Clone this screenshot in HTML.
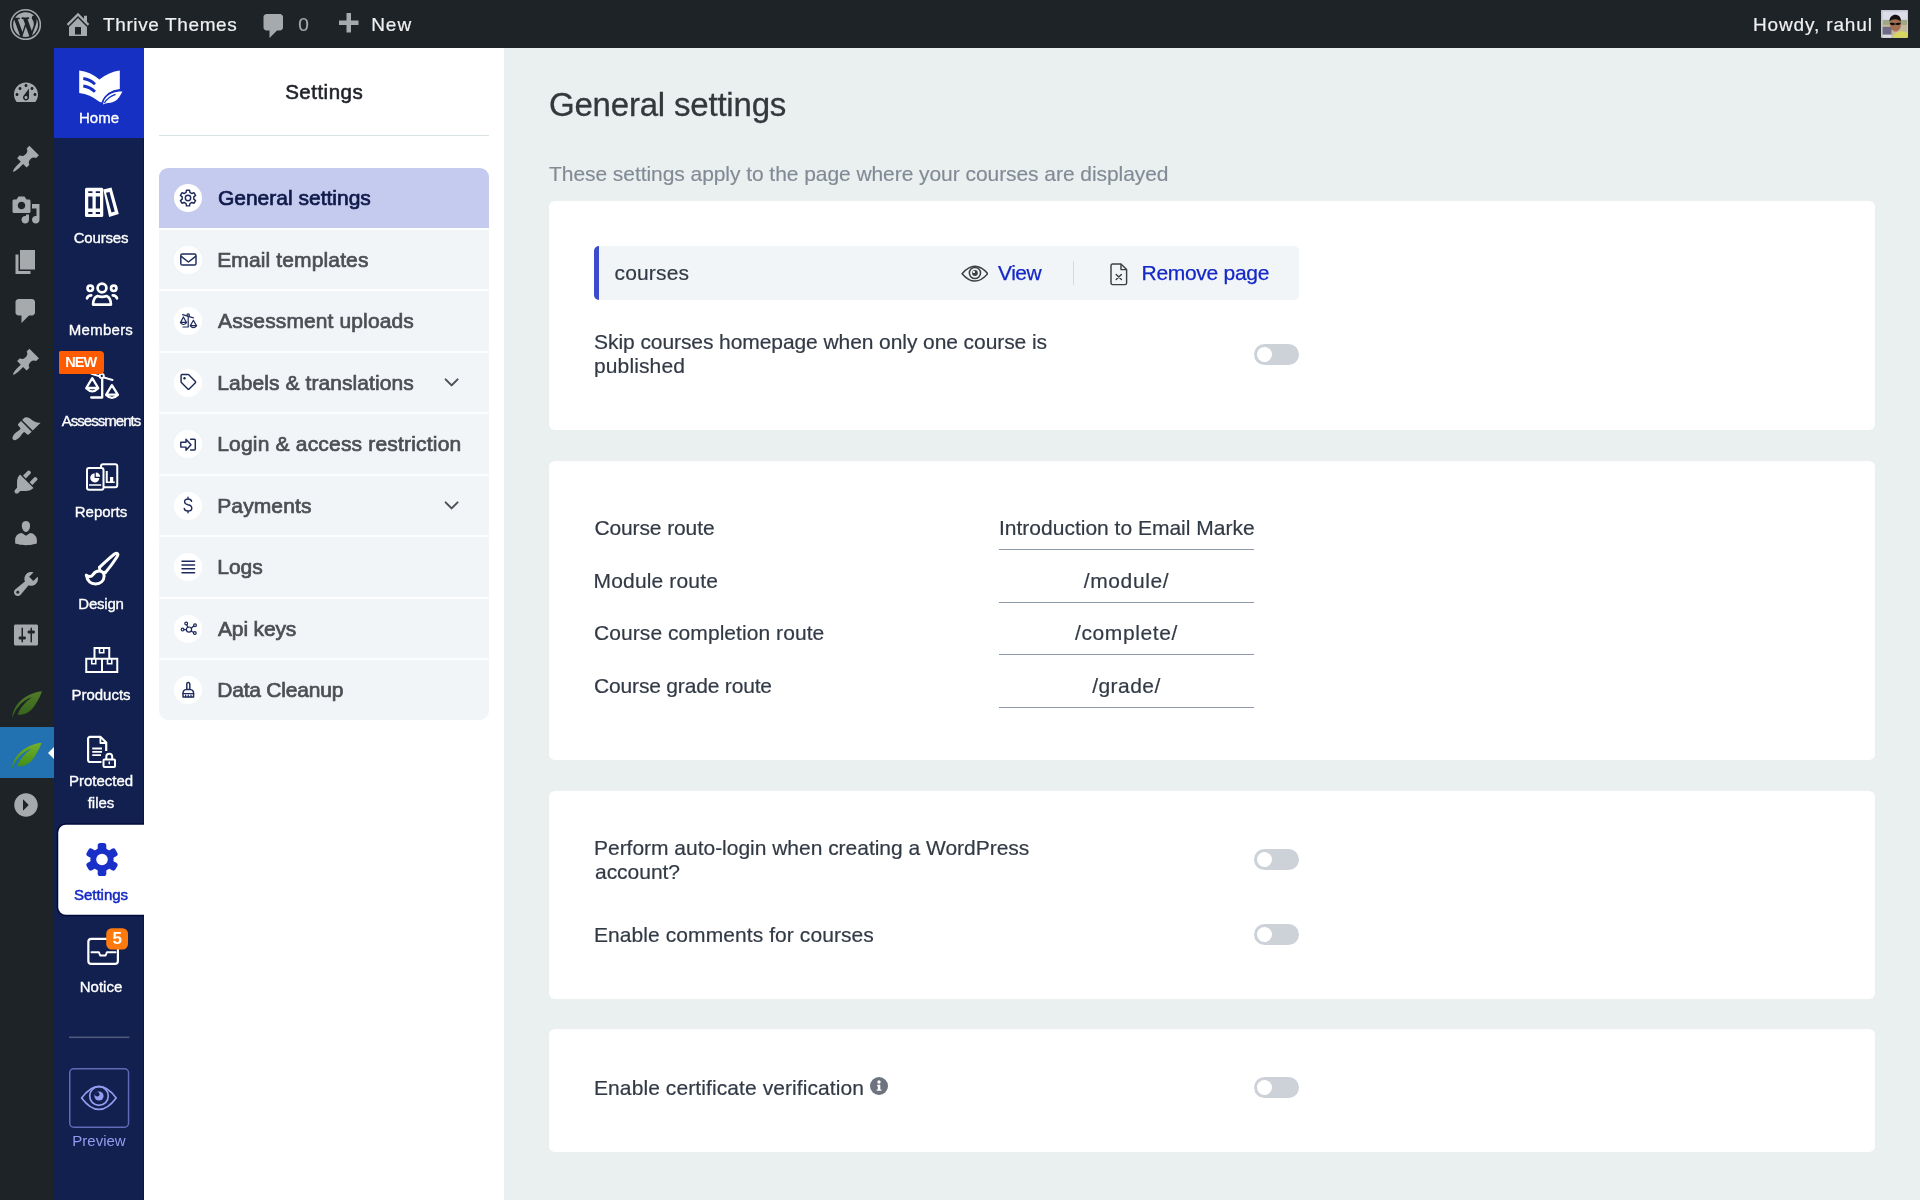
<!DOCTYPE html>
<html lang="en">
<head>
<meta charset="utf-8">
<title>Thrive Apprentice - General settings</title>
<style>
*{box-sizing:border-box;margin:0;padding:0}
html,body{width:1920px;height:1200px;overflow:hidden}
body{position:relative;background:#eaeff0;font-family:"Liberation Sans",Arial,sans-serif;color:#3a4149;-webkit-font-smoothing:antialiased}
#adminbar,#wpmenu,#tva,#panel,#main{will-change:transform}
/* ---------- WP admin bar ---------- */
#adminbar{position:absolute;left:0;top:0;width:1920px;height:48px;background:#1d2327;color:#f0f0f1;font-size:19px;-webkit-text-stroke:.2px currentColor;z-index:5}
#adminbar .t{position:absolute;top:.5px;height:48px;line-height:48px;white-space:nowrap}
#adminbar svg{position:absolute;fill:#a7aaad}
/* ---------- WP folded menu ---------- */
#wpmenu{position:absolute;left:0;top:48px;width:54px;height:1152px;background:#1d2327}
#wpmenu svg{position:absolute;left:11px;width:30px;height:30px;fill:#a7aaad;margin-top:1px}
#wpmenu .cur{position:absolute;left:0;top:679.3px;width:54px;height:50.7px;background:#2271b1}
#wpmenu .arrow{position:absolute;left:48px;top:698.8px;width:0;height:0;border:6px solid transparent;border-right-color:#fff;border-left-width:0}
/* ---------- Apprentice sidebar ---------- */
#tva{position:absolute;left:54px;top:48px;width:90px;height:1152px;overflow:hidden;box-shadow:inset -1px 0 #0a1543;background:#11204e;color:#fff;font-size:15px}
#tva .home{position:absolute;left:0;top:0;width:90px;height:90px;background:#1730c4}
#tva .lbl{position:absolute;width:120px;text-align:center;white-space:nowrap;line-height:18px;-webkit-text-stroke:.35px currentColor}
#tva .new{position:absolute;left:4.5px;top:303px;width:45.2px;height:22.7px;border-radius:1.5px 4px 4px 1.5px;background:#ff5c02;font-size:14.5px;font-weight:700;line-height:23px;text-align:center;letter-spacing:-.9px;text-indent:-.5px}
#tva .n5{position:absolute;left:52.25px;top:880.25px;width:21.75px;height:21.25px;font-size:17px;font-weight:700;line-height:21.25px;text-align:center}
#tva svg{position:absolute}
#tva .ic{fill:none;stroke:#fff;stroke-width:2;stroke-linejoin:round;stroke-linecap:round}
/* ---------- Settings panel ---------- */
#panel{position:absolute;left:144px;top:48px;width:360px;height:1152px;background:#fff}
#panel h2{position:absolute;left:0;top:31px;width:360px;text-align:center;font-size:20.5px;font-weight:400;color:#1f2328;line-height:26px;-webkit-text-stroke:.6px #1f2328}
#panel .hr{position:absolute;left:15px;top:86.6px;width:330px;height:1.6px;background:#d9e3e6}
#nav{position:absolute;left:15px;top:120px;width:330px;height:551.6px;background:#fdfdfe;border-radius:9px;overflow:hidden}
#nav .it{position:absolute;left:0;width:330px;height:59.75px;background:#f2f5f7;color:#4c4f55;font-size:21px;line-height:59.3px;white-space:nowrap;-webkit-text-stroke:.7px currentColor}
#nav .it.on{background:#c5cbee;color:#0f1a4a}
#nav .c{position:absolute;left:15px;top:16px;width:28px;height:28px;border-radius:50%;background:#fff}
#nav .it span{position:absolute;left:59px;top:0}
/* ---------- Content ---------- */
#main{position:absolute;left:504px;top:48px;width:1416px;height:1152px}
#main h1{position:absolute;left:45px;top:37px;font-size:33px;font-weight:400;color:#33383d;line-height:40px;white-space:nowrap;-webkit-text-stroke:.3px #33383d}
#main .desc{position:absolute;left:45px;top:113px;font-size:21px;line-height:26px;color:#808b95;white-space:nowrap;-webkit-text-stroke:.15px currentColor}
.card{position:absolute;left:45px;width:1326px;background:#fff;border-radius:6px}
.card .l{position:absolute;left:45px;font-size:21px;line-height:24px;color:#323a46;white-space:nowrap;-webkit-text-stroke:.2px currentColor}
.prow{position:absolute;left:45px;top:45px;width:705px;height:53.5px;background:#f2f5f7;border-radius:5px;border-left:5.5px solid #3a4ccb;font-size:21px;line-height:53.5px;white-space:nowrap}
.prow span,.prow svg,.prow i{position:absolute}
.prow .pn{left:15.5px;top:0;color:#323a46;-webkit-text-stroke:.2px currentColor}
.prow .lk{top:0;color:#1428c8;-webkit-text-stroke:.25px currentColor}
.prow .vs{left:473.5px;top:15px;width:1.5px;height:24px;background:#d6dbdf}
.tg{position:absolute;left:705px;width:45px;height:21px;border-radius:11px;background:#cdd2d9}
.tg i{position:absolute;left:3px;top:3px;width:15px;height:15px;border-radius:50%;background:#fff}
.inp{position:absolute;left:450px;width:255px;height:40px;border-bottom:1.5px solid #8f9bab;font-size:21px;line-height:35.5px;text-align:center;color:#323a46;white-space:nowrap;overflow:hidden;-webkit-text-stroke:.2px currentColor}
</style>
</head>
<body>

<!-- WP admin bar -->
<div id="adminbar">
  <svg viewBox="0 0 20 20" style="left:9.8px;top:8.5px;width:31.2px;height:31.2px"><path d="M20 10c0-5.52-4.48-10-10-10S0 4.48 0 10s4.48 10 10 10 10-4.48 10-10zM10 1.01c4.97 0 8.99 4.02 8.99 8.99s-4.02 8.99-8.99 8.99S1.01 14.97 1.01 10 5.03 1.01 10 1.01zM8.01 14.82L4.96 6.61c.49-.03 1.05-.08 1.05-.08.43-.05.38-1.01-.06-.99 0 0-1.29.1-2.13.1-.15 0-.33 0-.52-.01 1.44-2.17 3.9-3.6 6.7-3.6 2.09 0 3.99.79 5.41 2.09-.6-.08-1.45.35-1.45 1.42 0 .66.38 1.22.79 1.88.31.54.5 1.22.5 2.21 0 1.34-1.27 4.48-1.27 4.48l-2.71-7.5c.48-.03.75-.16.75-.16.43-.05.38-1.1-.05-1.08 0 0-1.3.11-2.14.11-.78 0-2.11-.11-2.11-.11-.43-.02-.48 1.06-.05 1.08l.84.08 1.12 3.04zm6.02 2.15L16.64 10s.67-1.69.39-3.81c.63 1.14.94 2.42.94 3.81 0 2.96-1.56 5.58-3.94 6.97zM2.68 6.77L6.5 17.25c-2.67-1.3-4.47-4.08-4.47-7.25 0-1.16.2-2.23.65-3.23zm7.45 4.53l2.29 6.25c-.75.27-1.57.42-2.42.42-.72 0-1.41-.11-2.06-.3z"/></svg><svg viewBox="0 0 20 20" style="left:63px;top:9px;width:30px;height:30px"><path d="M16 8.5l1.53 1.53-1.06 1.06L10 4.62l-6.47 6.47-1.06-1.06L10 2.5l4 4v-2h2v4zm-6-2.46l6 5.99V18H4v-5.97zM12 17v-5H8v5h4z"/></svg><svg viewBox="0 0 20 20" style="left:259px;top:11px;width:30px;height:30px"><path d="M5 2h9c1.1 0 2 .9 2 2v7c0 1.1-.9 2-2 2h-2l-5 5v-5H5c-1.1 0-2-.9-2-2V4c0-1.1.9-2 2-2z"/></svg><svg viewBox="0 0 20 20" style="left:333px;top:10px;width:30px;height:30px"><path d="M17 7v3h-5v5H9v-5H4V7h5V2h3v5h5z"/></svg>
  <span class="t" id="a0" style="letter-spacing:0.62px;margin-left:1.0px;left:102px">Thrive Themes</span>
  <span class="t" id="a1" style="letter-spacing:0.15px;margin-left:0.3px;left:298px;color:#a7aaad">0</span>
  <span class="t" id="a2" style="letter-spacing:0.95px;margin-left:-0.8px;left:372px">New</span>
  <span class="t" id="a3" style="letter-spacing:0.86px;margin-left:-3.2px;right:47.2px">Howdy, rahul</span>
  <svg viewBox="0 0 28 28" style="left:1880.6px;top:10px;width:27.7px;height:27.7px" >
    <rect width="28" height="28" fill="#c6c6d2"/>
    <rect x="1.6" y="1.6" width="24.8" height="26.4" fill="#dcdde8"/>
    <rect x="1.6" y="10" width="24.8" height="7" fill="#a0a784"/>
    <rect x="1.6" y="15" width="24.8" height="13" fill="#c4b99c"/>
    <rect x="1.6" y="17" width="9" height="8" fill="#6d6a86"/>
    <rect x="1.6" y="25" width="9" height="3" fill="#d9dbe2"/>
    <path d="M12 28C13 23 18 21 22 21.5L26.4 23V28Z" fill="#d8d560"/>
    <ellipse cx="14.6" cy="14.6" rx="5.6" ry="7.4" fill="#a06e4e"/>
    <path d="M8.6 11.8C8.4 6.6 12 4.6 14.8 4.8C18.6 5 20.6 8 20 12C18 8.6 11.6 8.4 8.6 11.8Z" fill="#16110f"/>
    <path d="M8.8 13.2C11 12.6 13 13 14.4 13.8C15.8 13 18.4 12.6 20 13.2C19.4 15.4 16.6 15.8 15.2 14.6H13.8C12.4 16 9.6 15.6 8.8 13.2Z" fill="#0c0c0e"/>
    <path d="M11.6 20.4Q13.6 22.4 16 21.2" stroke="#c98a84" stroke-width="1.2" fill="none"/>
  </svg>
</div>

<!-- WP folded admin menu -->
<div id="wpmenu">
  <svg viewBox="0 0 20 20" style="top:29px"><path d="M3.76 16h12.48c1.1-1.37 1.76-3.11 1.76-5 0-4.42-3.58-8-8-8s-8 3.58-8 8c0 1.89.66 3.63 1.76 5zM10 4c.55 0 1 .45 1 1s-.45 1-1 1-1-.45-1-1 .45-1 1-1zM6 6c.55 0 1 .45 1 1s-.45 1-1 1-1-.45-1-1 .45-1 1-1zm8 0c.55 0 1 .45 1 1s-.45 1-1 1-1-.45-1-1 .45-1 1-1zm-5.37 5.55L12 7v6c0 1.1-.9 2-2 2s-2-.9-2-2c0-.57.24-1.08.63-1.45zM4 10c.55 0 1 .45 1 1s-.45 1-1 1-1-.45-1-1 .45-1 1-1zm12 0c.55 0 1 .45 1 1s-.45 1-1 1-1-.45-1-1 .45-1 1-1zm-5 3c0-.55-.45-1-1-1s-1 .45-1 1 .45 1 1 1 1-.45 1-1z"/></svg>
  <svg viewBox="0 0 20 20" style="top:95px"><path d="M10.44 3.02l1.82-1.82 6.36 6.35-1.83 1.82c-1.05-.68-2.48-.57-3.41.36l-.75.75c-.92.93-1.04 2.35-.35 3.41l-1.83 1.82-2.41-2.41-2.8 2.79c-.42.42-3.38 2.71-3.8 2.29s1.86-3.39 2.28-3.81l2.79-2.79L4.1 9.36l1.83-1.82c1.05.69 2.48.57 3.4-.36l.75-.75c.93-.92 1.05-2.35.36-3.41z"/></svg>
  <svg viewBox="0 0 20 20" style="top:146px"><path d="M13 11V4c0-.55-.45-1-1-1h-1.67L9 1H5L3.67 3H2c-.55 0-1 .45-1 1v7c0 .55.45 1 1 1h10c.55 0 1-.45 1-1zM7 4.5c1.38 0 2.5 1.12 2.5 2.5S8.38 9.5 7 9.5 4.5 8.38 4.5 7 5.62 4.5 7 4.5zM14 6h5v10.5c0 1.38-1.12 2.5-2.5 2.5S14 17.88 14 16.5s1.12-2.5 2.5-2.5c.17 0 .34.02.5.05V9h-3V6zm-4 8.05V13h2v3.5c0 1.38-1.12 2.5-2.5 2.5S7 17.88 7 16.5 8.12 14 9.5 14c.17 0 .34.02.5.05z"/></svg>
  <svg viewBox="0 0 20 20" style="top:198px"><path d="M6 15V2h10v13H6zm-1 1h8v2H3V5h2v11z"/></svg>
  <svg viewBox="0 0 20 20" style="top:247px"><path d="M5 2h9c1.1 0 2 .9 2 2v7c0 1.1-.9 2-2 2h-2l-5 5v-5H5c-1.1 0-2-.9-2-2V4c0-1.1.9-2 2-2z"/></svg>
  <svg viewBox="0 0 20 20" style="top:298px"><path d="M10.44 3.02l1.82-1.82 6.36 6.35-1.83 1.82c-1.05-.68-2.48-.57-3.41.36l-.75.75c-.92.93-1.04 2.35-.35 3.41l-1.83 1.82-2.41-2.41-2.8 2.79c-.42.42-3.38 2.71-3.8 2.29s1.86-3.39 2.28-3.81l2.79-2.79L4.1 9.36l1.83-1.82c1.05.69 2.48.57 3.4-.36l.75-.75c.93-.92 1.05-2.35.36-3.41z"/></svg>
  <svg viewBox="0 0 20 20" style="top:365px"><path d="M14.48 11.06L7.41 3.99l1.5-1.5c.5-.56 2.3-.47 3.51.32 1.21.8 1.43 1.28 2.91 2.1 1.18.64 2.45 1.26 4.45.85zm-.71.71L6.7 4.7 4.93 6.47c-.39.39-.39 1.02 0 1.41l1.06 1.06c.39.39.39 1.03 0 1.42-.6.6-1.43 1.11-2.21 1.69-.35.26-.7.53-1.01.84C1.43 14.23.4 16.08 1.4 17.07c.99 1 2.84-.03 4.18-1.36.31-.31.58-.66.85-1.02.57-.78 1.08-1.61 1.69-2.21.39-.39 1.02-.39 1.41 0l1.06 1.06c.39.39 1.02.39 1.41 0z"/></svg>
  <svg viewBox="0 0 20 20" style="top:418px"><path d="M13.11 4.36L9.87 7.6 8 5.73l3.24-3.24c.35-.34 1.05-.2 1.56.32.52.51.66 1.21.31 1.55zm-8 1.77l.91-1.12 9.01 9.01-1.19.84c-.71.71-2.63 1.16-3.82 1.16H6.14L4.9 17.26c-.59.59-1.54.59-2.12 0-.59-.58-.59-1.53 0-2.12l1.24-1.24v-3.88c0-1.13.4-3.19 1.09-3.89zm7.26 3.97l3.24-3.24c.34-.35 1.04-.21 1.55.31.52.51.66 1.21.31 1.55l-3.24 3.25z"/></svg>
  <svg viewBox="0 0 20 20" style="top:469px"><path d="M10 9.25c-2.27 0-2.73-3.44-2.73-3.44C7 4.02 7.82 2 9.97 2c2.16 0 2.98 2.02 2.71 3.81 0 0-.41 3.44-2.68 3.44zm0 2.57L12.72 10c2.39 0 4.52 2.33 4.52 4.53v2.49s-3.65 1.13-7.24 1.13c-3.65 0-7.24-1.13-7.24-1.13v-2.49c0-2.25 1.94-4.48 4.47-4.48z"/></svg>
  <svg viewBox="0 0 20 20" style="top:520px"><path d="M16.68 9.77c-1.34 1.34-3.3 1.67-4.95.99l-5.41 6.52c-.99.99-2.59.99-3.58 0s-.99-2.59 0-3.57l6.52-5.42c-.68-1.65-.35-3.61.99-4.95 1.28-1.28 3.12-1.62 4.72-1.06l-2.89 2.89 2.82 2.82 2.86-2.87c.53 1.58.18 3.39-1.08 4.65zM3.81 16.21c.4.39 1.04.39 1.43 0 .4-.4.4-1.04 0-1.43-.39-.4-1.03-.4-1.43 0-.39.39-.39 1.03 0 1.43z"/></svg>
  <svg viewBox="0 0 20 20" style="top:571px"><path d="M18 16V4c0-.55-.45-1-1-1H3c-.55 0-1 .45-1 1v12c0 .55.45 1 1 1h14c.55 0 1-.45 1-1zM8 11h1c.55 0 1 .45 1 1s-.45 1-1 1H8v1.5c0 .28-.22.5-.5.5s-.5-.22-.5-.5V13H6c-.55 0-1-.45-1-1s.45-1 1-1h1V5.5c0-.28.22-.5.5-.5s.5.22.5.5V11zm5-2h-1c-.55 0-1-.45-1-1s.45-1 1-1h1V5.5c0-.28.22-.5.5-.5s.5.22.5.5V7h1c.55 0 1 .45 1 1s-.45 1-1 1h-1v5.5c0 .28-.22.5-.5.5s-.5-.22-.5-.5V9z"/></svg>
  <svg viewBox="0 0 20 20" style="top:741px;transform:rotate(180deg)"><path d="M10 2.16c4.33 0 7.84 3.51 7.84 7.84s-3.51 7.84-7.84 7.84S2.16 14.33 2.16 10 5.67 2.16 10 2.16zm2 11.72V6.12L8.18 10z"/></svg>
    <div class="cur"></div><div class="arrow"></div>
  <svg viewBox="0 0 54 1152" style="left:0;top:0;width:54px;height:1152px;fill:none;margin-top:0">
    <defs><linearGradient id="lg" x1="0" y1="0" x2="0" y2="1"><stop offset="0" stop-color="#74b02c"/><stop offset="1" stop-color="#3c8a12"/></linearGradient></defs>
    <path fill="url(#lg)" opacity=".62" d="M42 643.25C36 643.6 28 646.5 22 651.5C16 656.5 12.6 663 12 670.4C14.2 664 18 657.8 24.4 653C27.2 651 29.6 649.8 32 649.2C27 652.4 20.6 658.6 17.6 666.5C24.5 668 31.5 663.5 36 655.5C39 650.5 41 646.5 42 643.25Z"/>
    <path fill="url(#lg)" transform="translate(-.4 51.5)" d="M42 643.25C36 643.6 28 646.5 22 651.5C16 656.5 12.6 663 12 670.4C14.2 664 18 657.8 24.4 653C27.2 651 29.6 649.8 32 649.2C27 652.4 20.6 658.6 17.6 666.5C24.5 668 31.5 663.5 36 655.5C39 650.5 41 646.5 42 643.25Z"/>
  </svg>
</div>

<!-- Thrive Apprentice sidebar -->
<div id="tva">
  <div class="home"></div>
  <svg viewBox="54 48 90 1152" width="90" height="1152" style="left:0;top:0">
  <!-- home logo -->
  <g transform="translate(54 48)">
    <path fill="#fff" d="M25.2 22.6Q36 23.6 45.4 31.6Q55 24 65.8 22.6L65.8 41Q52.5 42 47.4 54.6L45.4 53.7Q36 46.2 25.2 44.9Z"/>
    <path fill="none" stroke="#1730c4" stroke-width="2.8" d="M29.3 30.5Q36 31.5 41 36.2M29.3 38Q36 39 41 43.8"/>
    <path fill="#fff" stroke="#1730c4" stroke-width="1.6" d="M48.2 58C48.5 47 58 42.6 70 42.4C66.5 48 65 55.4 54 55.9C51.5 56 50 56.4 48.2 58Z"/>
    <path fill="none" stroke="#1730c4" stroke-width="1.3" d="M50.3 55Q54 48.8 61.6 46.3"/>
  </g>
  <!-- courses -->
  <path fill="#fff" fill-rule="evenodd" d="M86.5 187.75h15.25a1.5 1.5 0 0 1 1.5 1.5v26.25a1.5 1.5 0 0 1-1.5 1.5H86.5a1.5 1.5 0 0 1-1.5-1.5V189.25a1.5 1.5 0 0 1 1.5-1.5ZM88.25 191.2h4.25v1.9h-4.25ZM95.75 191.2h4.25v1.9h-4.25ZM88.25 196.5h4.25v12h-4.25ZM95.75 196.5h4.25v12h-4.25ZM88.25 212h4.25v2h-4.25ZM95.75 212h4.25v2h-4.25Z"/>
  <path fill="#fff" fill-rule="evenodd" d="M103.3 189.4L111.5 187.6L118.8 214L109.1 217ZM106 192.8L109.5 192L114.75 211.4L111.5 212.5Z"/>
  <!-- members -->
  <g fill="none" stroke="#fff" stroke-width="2.7" stroke-linecap="round" stroke-linejoin="round">
    <circle cx="102" cy="288" r="4.4"/>
    <circle cx="90.25" cy="288.3" r="2.7"/>
    <circle cx="113.75" cy="288.3" r="2.7"/>
    <path d="M97.5 296Q102 297.6 106.5 296Q110.8 297.5 110.9 304.6H93.1Q93.2 297.5 97.5 296Z"/>
    <path d="M87 298.4Q87.6 295.6 91.2 295.4M117 298.4Q116.4 295.6 112.8 295.4"/>
  </g>
  <!-- assessments -->
  <g fill="none" stroke="#fff" stroke-width="2.3" stroke-linecap="round" stroke-linejoin="round">
    <path d="M91.5 373.9L112.5 380" stroke-width="2"/>
    <path d="M102.2 379V397.5H91.2" stroke-width="2.3"/>
    <path d="M92.25 378.2L86.3 388H98.2ZM86.2 388.3Q92.25 394.5 98.3 388.3"/>
    <path d="M111.9 385.2L106.2 394.6H117.8ZM106.1 394.9Q111.9 400.8 117.9 394.9"/>
  </g>
  <circle cx="101.75" cy="376" r="2.1" fill="#11204e" stroke="#fff" stroke-width="1.9"/>
  <!-- reports -->
  <g fill="none" stroke="#fff" stroke-width="2" stroke-linejoin="round">
    <rect x="101" y="464.25" width="16.25" height="23" rx="2"/>
    <rect x="87" y="468" width="16.5" height="21.75" rx="2" fill="#11204e"/>
  </g>
  <path fill="#fff" d="M94.6 473.2V478H99.4A4.6 4.6 0 1 1 94.6 473.2ZM95.8 472.4A4.4 4.4 0 0 1 100.2 476.8H95.8ZM89 484.25h12.25v1.6H89ZM105.75 471h2v10.5h2.25V477h3.25v4.5h1.5v1.6h-9Z"/>
  <!-- design -->
  <g fill="none" stroke="#fff" stroke-width="3" stroke-linejoin="round" stroke-linecap="round">
    <path d="M99.5 567.4C104 563 110 557.6 114.8 553.8C117.2 552.6 118.4 553.8 117.6 555.8C114.6 560.8 109.6 567.6 105.6 572.4"/>
    <path d="M86.3 575.2C87.4 580.8 91 583.9 95.6 583.9C100.6 583.8 104 580.6 104.1 576.2C104.2 573.4 102 571.3 99.2 571.1C96.2 571 94.4 572.6 93 574.6C91.4 576.8 88.8 577 86.3 575.2Z"/>
    <path d="M99.5 567.4C99.3 569.2 100 570.6 101.4 571.4M105.6 572.4C105 572.2 104.4 572 103.8 572.2" stroke-width="2.6"/>
  </g>
  <!-- products -->
  <g fill="none" stroke="#fff" stroke-width="2">
    <path d="M94.5 658V648H109.25V658"/>
    <rect x="86.25" y="658.75" width="31" height="13.25"/>
    <path d="M102 658.75V672" />
    <path stroke-width="1.6" d="M99.5 648V652.7H103.75V648M91.75 659V663.7H95.75V659M107.5 659V663.7H111.75V659"/>
  </g>
  <!-- protected files -->
  <g fill="none" stroke="#fff" stroke-width="2.2" stroke-linejoin="round">
    <path d="M101.5 762H90a1.9 1.9 0 0 1-1.9-1.9V738.8a1.9 1.9 0 0 1 1.9-1.9H100.6L106.2 742.6V751"/>
    <path stroke-width="1.8" d="M100.4 737V743H106.2"/>
    <path stroke-width="1.8" d="M92.25 748.5H102M92.25 751.8H102M92.25 755.1H101"/>
    <rect x="103.5" y="759.5" width="11.5" height="7.4" rx="1" stroke-width="2"/>
    <path stroke-width="2" d="M106.3 759V756.6a2.95 2.95 0 0 1 5.9 0V759"/>
  </g>
  <rect x="108.5" y="761.2" width="1.5" height="3.3" rx=".7" fill="#fff"/>
  <!-- settings (active) -->
  <rect x="58.25" y="824.75" width="92" height="90" rx="7.5" fill="#fff" stroke="#000a3c" stroke-width="3" paint-order="stroke"/>
  <g fill="#1930c8"><rect x="97.70" y="842.90" width="8.60" height="9.00" rx="2.6" transform="rotate(0 102 859.5)"/><rect x="97.70" y="842.90" width="8.60" height="9.00" rx="2.6" transform="rotate(60 102 859.5)"/><rect x="97.70" y="842.90" width="8.60" height="9.00" rx="2.6" transform="rotate(120 102 859.5)"/><rect x="97.70" y="842.90" width="8.60" height="9.00" rx="2.6" transform="rotate(180 102 859.5)"/><rect x="97.70" y="842.90" width="8.60" height="9.00" rx="2.6" transform="rotate(240 102 859.5)"/><rect x="97.70" y="842.90" width="8.60" height="9.00" rx="2.6" transform="rotate(300 102 859.5)"/><circle cx="102" cy="859.5" r="11.6"/></g>
  <circle cx="102" cy="859.5" r="5.8" fill="#fff"/>
  <!-- notice -->
  <g fill="none" stroke="#fff" stroke-width="2.2" stroke-linejoin="round" stroke-linecap="round">
    <rect x="88.35" y="938.85" width="29.55" height="25.05" rx="3"/>
    <path stroke-width="2" d="M91.5 952.25H98.9L100.2 955.5H105.6L106.9 952.25H115.5"/>
  </g>
  <rect x="106.25" y="928.25" width="21.75" height="21.25" rx="5.5" fill="#ff7a0d"/>
  <!-- divider + preview -->
  <rect x="69" y="1036.5" width="60.3" height="1.6" fill="#50597a"/>
  <rect x="69.75" y="1068.75" width="58.8" height="58.5" rx="4" fill="none" stroke="#5f6ab6" stroke-width="1.5"/>
  <g fill="none" stroke="#929cf0" stroke-width="1.7">
    <path d="M81.6 1097.9Q99 1074.8 116.2 1097.9Q99 1121 81.6 1097.9Z" stroke-linejoin="round"/>
    <circle cx="99" cy="1096" r="9.3"/>
  </g>
  <circle cx="99" cy="1096" r="4.6" fill="#929cf0"/>
  <circle cx="97.2" cy="1094.2" r="2.3" fill="#11204e"/>
</svg>
  <div class="lbl" id="s0" style="letter-spacing:0.02px;top:60.9px;left:-15px">Home</div>
  <div class="lbl" id="s1" style="letter-spacing:-0.16px;top:180.5px;left:-13px">Courses</div>
  <div class="lbl" id="s2" style="letter-spacing:0.25px;top:272.5px;left:-13px">Members</div>
  <div class="lbl" id="s3" style="letter-spacing:-0.97px;top:363.5px;left:-13px">Assessments</div>
  <div class="lbl" id="s4" style="letter-spacing:-0.0px;top:455.3px;left:-13px">Reports</div>
  <div class="lbl" id="s5" style="letter-spacing:-0.2px;top:546.8px;left:-13px">Design</div>
  <div class="lbl" id="s6" style="top:638.4px;left:-13px">Products</div>
  <div class="lbl" id="s7" style="top:723.8px;left:-13px">Protected</div>
  <div class="lbl" id="s8" style="top:746.3px;left:-13px">files</div>
  <div class="lbl" id="s9" style="top:837.5px;left:-13px;color:#1428c4;-webkit-text-stroke:.5px #1428c4">Settings</div>
  <div class="lbl" id="s10" style="top:929.7px;left:-13px">Notice</div>
  <div class="lbl" id="s11" style="top:1084px;left:-15px;color:#929cf0;-webkit-text-stroke:0">Preview</div>
  <div class="new" id="s12">NEW</div>
  <div class="n5" id="s13">5</div>
</div>

<!-- Settings panel -->
<div id="panel">
  <h2 id="p0" style="letter-spacing:0.48px;margin-left:0.2px">Settings</h2>
  <div class="hr"></div>
  <div id="nav">
    <div class="it on" style="top:0px"><div class="c"></div><span id="n0" style="letter-spacing:0.0px;margin-left:-0.1px">General settings</span></div>
    <div class="it" style="top:61.5px"><div class="c"></div><span id="n1" style="letter-spacing:0.13px;margin-left:-0.8px">Email templates</span></div>
    <div class="it" style="top:123px"><div class="c"></div><span id="n2" style="letter-spacing:0.12px">Assessment uploads</span></div>
    <div class="it" style="top:184.5px"><div class="c"></div><span id="n3" style="letter-spacing:0.08px;margin-left:-0.8px">Labels &amp; translations</span></div>
    <div class="it" style="top:246px"><div class="c"></div><span id="n4" style="letter-spacing:0.19px;margin-left:-0.8px">Login &amp; access restriction</span></div>
    <div class="it" style="top:307.5px"><div class="c"></div><span id="n5" style="letter-spacing:0.12px;margin-left:-0.8px">Payments</span></div>
    <div class="it" style="top:369px"><div class="c"></div><span id="n6" style="letter-spacing:0.0px;margin-left:-0.8px">Logs</span></div>
    <div class="it" style="top:430.5px"><div class="c"></div><span id="n7" style="letter-spacing:-0.15px">Api keys</span></div>
    <div class="it" style="top:492px"><div class="c"></div><span id="n8" style="letter-spacing:-0.21px;margin-left:-0.8px">Data Cleanup</span></div>
  </div>
<svg viewBox="144 48 360 1152" width="360" height="1152" style="position:absolute;left:0;top:0" fill="none" stroke="#1f2b5c" stroke-width="1.45" stroke-linecap="round" stroke-linejoin="round">
  <g><path d="M186.08 192.42 L186.47 190.15 L189.53 190.15 L189.92 192.42 L191.87 193.55 L194.04 192.75 L195.56 195.40 L193.79 196.87 L193.79 199.13 L195.56 200.60 L194.04 203.25 L191.87 202.45 L189.92 203.58 L189.53 205.85 L186.47 205.85 L186.08 203.58 L184.13 202.45 L181.96 203.25 L180.44 200.60 L182.21 199.13 L182.21 196.87 L180.44 195.40 L181.96 192.75 L184.13 193.55Z" stroke-linejoin="round"/><circle cx="188" cy="198" r="2.7"/></g>
  <!-- email -->
  <rect x="180.8" y="254" width="15.2" height="11" rx="1.6"/><path d="M181.2 256.4L188.4 262L195.6 256.4"/>
  <!-- scales small -->
  <g stroke-width="1.2"><path d="M182.6 314.6L193.4 317.8M188.2 316.4V327H183M183.4 317L180.6 322.4H186.4ZM180.4 322.6Q183.4 326.4 186.6 322.6M193.4 320.2L190.4 325.6H196.4ZM190.2 325.8Q193.4 329.4 196.6 325.8"/><circle cx="188.2" cy="315" r="1.2" fill="#fff"/></g>
  <!-- tag -->
  <path d="M181.1 375.4a.9.9 0 0 1 .9-.9h6.1a.9.9 0 0 1 .64.26L195.4 381.4a.9.9 0 0 1 0 1.27L189.1 389a.9.9 0 0 1-1.27 0L181.36 382.5a.9.9 0 0 1-.26-.64Z"/><circle cx="184.5" cy="378.2" r="1.2" fill="#1a2452" stroke="none"/>
  <!-- login -->
  <path d="M180.8 442.3H186V439.2L191 444.7L186 450.2V447.1H180.8ZM190.6 439.2H194.3a1 1 0 0 1 1 1V449a1 1 0 0 1-1 1H190.6"/>
  <!-- dollar -->
  <path stroke-width="1.4" d="M191.6 501.4Q191.2 499 188 499Q184.6 499 184.6 501.8Q184.6 504 188 504.8Q191.8 505.6 191.8 508.2Q191.8 511 188 511Q184.6 511 184.2 508.4M188 497.2V499M188 511V512.8"/>
  <!-- logs -->
  <path d="M182 561.2H194.6M182 565H194.6M182 568.8H194.6M182 572.7H194.6"/>
  <!-- api -->
  <g stroke-width="1.2"><circle cx="189" cy="629.6" r="2.6"/><circle cx="186.2" cy="623.6" r="1.4"/><circle cx="195" cy="625.3" r="1.4"/><circle cx="182.6" cy="629.6" r="1.4"/><circle cx="194.8" cy="633" r="1.4"/><path d="M187.9 627.2L186.8 624.9M191.3 628.2L193.7 626M186.4 629.6H184M191.2 631L193.6 632.4"/></g>
  <!-- cleanup -->
  <path d="M186.8 689V684a1.5 1.5 0 0 1 3 0V689"/><path d="M183 697V693.4Q183 689.6 186.8 689.4H189.8Q193.6 689.6 193.6 693.4V697Z"/><path d="M183 693.6H193.6" stroke-width="1.4"/><path stroke-width="1.2" d="M185.6 697V695M188.3 697V695M191 697V695"/>
  <!-- chevrons -->
  <g stroke="#4c4f55" stroke-width="2"><path d="M445.6 379.4L451.6 385.4L457.6 379.4M445.6 502.4L451.6 508.4L457.6 502.4"/></g>
</svg>
</div>

<!-- Main content -->
<div id="main">
  <h1 id="m0" style="letter-spacing:-0.2px">General settings</h1>
  <div class="desc" id="m1" style="letter-spacing:-0.06px">These settings apply to the page where your courses are displayed</div>

  <div class="card" style="top:153px;height:229px">
    <div class="prow">
      <span class="pn" id="m2" style="letter-spacing:0.17px">courses</span>
      <svg viewBox="0 0 26 18" style="left:361.5px;top:18.4px;width:27.9px;height:19.3px" fill="none" stroke="#3c4043" stroke-width="1.45"><path d="M1 9Q13 -4.8 25 9Q13 22.8 1 9Z" stroke-linejoin="round"/><circle cx="13" cy="8.4" r="5.2"/><circle cx="13" cy="8.4" r="2.7" fill="#3c4043" stroke="none"/><circle cx="12" cy="7.4" r="1.1" fill="#f2f5f7" stroke="none"/></svg>
      <span class="lk" id="m3" style="letter-spacing:-0.5px;margin-left:-5.0px;left:404px">View</span>
      <i class="vs"></i>
      <svg viewBox="0 0 18 23" style="left:510.5px;top:16.6px;width:18px;height:23px" fill="none" stroke="#3c4043" stroke-width="1.45" stroke-linejoin="round"><path d="M2.6 1H11L16.6 6.6V20a1.6 1.6 0 0 1-1.6 1.6H2.6A1.6 1.6 0 0 1 1 20V2.6A1.6 1.6 0 0 1 2.6 1Z"/><path d="M11 1V6.6H16.6"/><path d="M6.2 11.4L11.4 16.6M11.4 11.4L6.2 16.6" stroke-linecap="round"/></svg>
      <span class="lk" id="m4" style="letter-spacing:-0.29px;margin-left:-6.0px;left:548.5px">Remove page</span>
    </div>
    <div class="l" id="m5" style="letter-spacing:-0.08px;margin-left:0.1px;top:128.5px">Skip courses homepage when only one course is</div><div class="l" id="m6" style="letter-spacing:0.12px;top:152.6px">published</div>
    <div class="tg" style="top:142.6px"><i></i></div>
  </div>

  <div class="card" style="top:413px;height:299px">
    <div class="l" id="m7" style="letter-spacing:-0.11px;margin-left:0.4px;top:55px">Course route</div><div class="inp" id="i0" style="top:49.25px;text-align:left">Introduction to Email Marketing</div>
    <div class="l" id="m8" style="letter-spacing:0.15px;margin-left:-0.4px;top:107.5px">Module route</div><div class="inp" id="i1" style="letter-spacing:0.6px;top:101.75px">/module/</div>
    <div class="l" id="m9" style="letter-spacing:0.06px;margin-left:0.1px;top:160px">Course completion route</div><div class="inp" id="i2" style="letter-spacing:0.6px;top:154.25px">/complete/</div>
    <div class="l" id="m10" style="letter-spacing:-0.18px;margin-left:0.1px;top:212.5px">Course grade route</div><div class="inp" id="i3" style="letter-spacing:0.46px;top:206.75px">/grade/</div>
  </div>

  <div class="card" style="top:743px;height:207.75px">
    <div class="l" id="m11" style="letter-spacing:-0.02px;top:44.7px">Perform auto-login when creating a WordPress</div><div class="l" id="m12" style="letter-spacing:-0.03px;margin-left:1.0px;top:69px">account?</div>
    <div class="tg" style="top:58px"><i></i></div>
    <div class="l" id="m13" style="letter-spacing:0.08px;top:131.7px">Enable comments for courses</div>
    <div class="tg" style="top:133px"><i></i></div>
  </div>

  <div class="card" style="top:980.75px;height:123px">
    <div class="l" id="m14" style="letter-spacing:0.09px;top:47px">Enable certificate verification</div><svg viewBox="0 0 18 18" style="position:absolute;left:321px;top:48px;width:18px;height:18px"><circle cx="9" cy="9" r="9" fill="#6d7480"/><circle cx="9" cy="5" r="1.7" fill="#fff"/><path fill="#fff" d="M7.2 7.8H10.3V12.4H11.4V13.8H6.7V12.4H7.8V9.2H7.2Z"/></svg>
    <div class="tg" style="top:48px"><i></i></div>
  </div>
</div>

</body>
</html>
